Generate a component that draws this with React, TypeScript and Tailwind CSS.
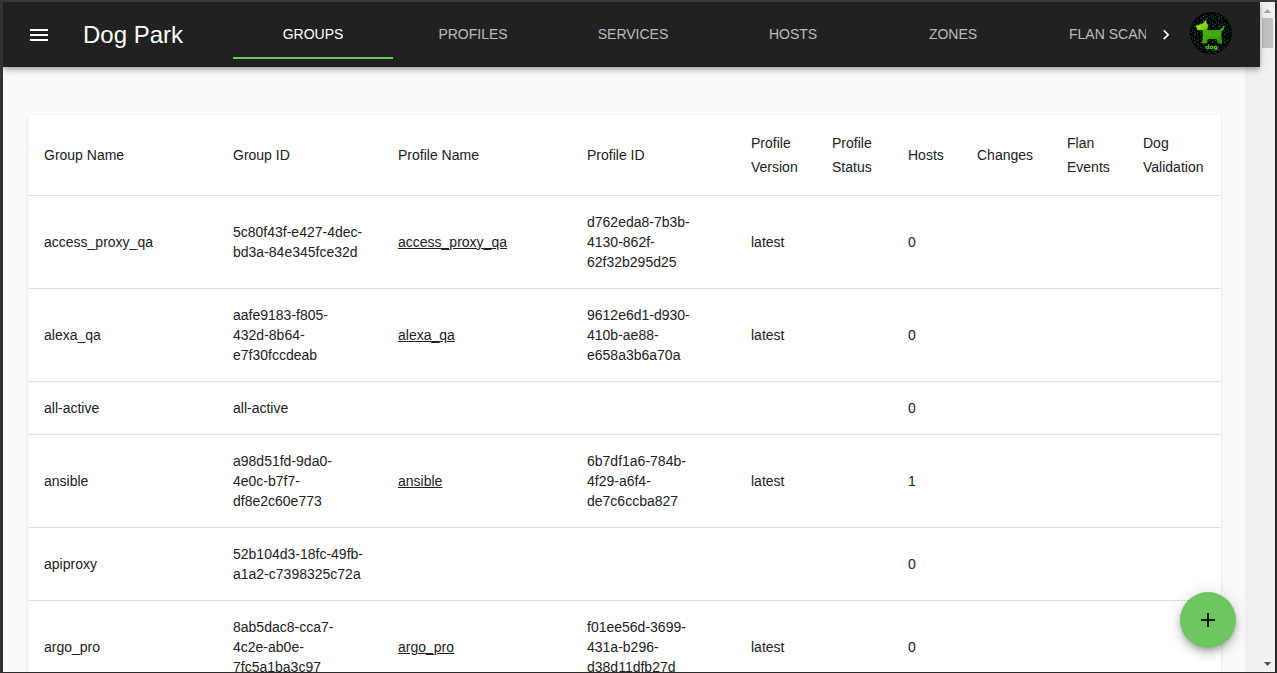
import { useState } from 'react';

type Row = {
  name: string;
  id: string;
  profile?: string;
  profileId?: string;
  version?: string;
  hosts: number;
};

const rows: Row[] = [
  { name: 'access_proxy_qa', id: '5c80f43f-e427-4dec-\nbd3a-84e345fce32d', profile: 'access_proxy_qa', profileId: 'd762eda8-7b3b-\n4130-862f-\n62f32b295d25', version: 'latest', hosts: 0 },
  { name: 'alexa_qa', id: 'aafe9183-f805-\n432d-8b64-\ne7f30fccdeab', profile: 'alexa_qa', profileId: '9612e6d1-d930-\n410b-ae88-\ne658a3b6a70a', version: 'latest', hosts: 0 },
  { name: 'all-active', id: 'all-active', hosts: 0 },
  { name: 'ansible', id: 'a98d51fd-9da0-\n4e0c-b7f7-\ndf8e2c60e773', profile: 'ansible', profileId: '6b7df1a6-784b-\n4f29-a6f4-\nde7c6ccba827', version: 'latest', hosts: 1 },
  { name: 'apiproxy', id: '52b104d3-18fc-49fb-\na1a2-c7398325c72a', hosts: 0 },
  { name: 'argo_pro', id: '8ab5dac8-cca7-\n4c2e-ab0e-\n7fc5a1ba3c97', profile: 'argo_pro', profileId: 'f01ee56d-3699-\n431a-b296-\nd38d11dfb27d', version: 'latest', hosts: 0 },
];

const columns = [
  { label: 'Group Name', width: 'w-[189px]' },
  { label: 'Group ID', width: 'w-[165px]' },
  { label: 'Profile Name', width: 'w-[189px]' },
  { label: 'Profile ID', width: 'w-[164px]' },
  { label: 'Profile Version', width: 'w-[81px]' },
  { label: 'Profile Status', width: 'w-[76px]' },
  { label: 'Hosts', width: 'w-[69px]' },
  { label: 'Changes', width: 'w-[90px]' },
  { label: 'Flan Events', width: 'w-[76px]' },
  { label: 'Dog Validation', width: 'w-[94px]' },
];

const tabs = ['Groups', 'Profiles', 'Services', 'Hosts', 'Zones', 'Flan Scans'];

function DogLogo() {
  return (
    <svg viewBox="0 0 42 42" className="size-[42px]" role="img" aria-label="dog">
      <defs>
        <linearGradient id="dogHead" x1="0" y1="0" x2="1" y2="1">
          <stop offset="0" stopColor="#b4f01e" />
          <stop offset="1" stopColor="#5fc40f" />
        </linearGradient>
        <linearGradient id="dogBody" x1="0" y1="0" x2="1" y2="1">
          <stop offset="0" stopColor="#4fbe0c" />
          <stop offset="1" stopColor="#2a960a" />
        </linearGradient>
        <pattern id="matrix" width="6" height="8" patternUnits="userSpaceOnUse">
          <path d="M1.500 0v1M1.500 4v1M4.500 3v1M4.500 6v1" stroke="#0f5548" strokeWidth="1" />
          <path d="M2.500 2v1M5.500 5v2" stroke="#12401a" strokeWidth="1" />
        </pattern>
      </defs>
      <circle cx="21" cy="21" r="21" fill="#020604" />
      <circle cx="21" cy="21" r="20" fill="url(#matrix)" />
      <path
        d="M12.500 17.500 17 17 18 18 28.500 18C31 17.500 32.500 16 33.500 13.500L34.300 14C34.300 17 33 18.800 31.500 19.800L31.300 24 32.300 31.500 27.700 31.500 27 27.500C24 26.500 20 26.500 17.500 27.500L16.800 31.500 12 31.500 12.800 24z"
        fill="url(#dogBody)"
      />
      <path d="M20 18h8.500l2.800 1.500-.3 4-4 2.500z" fill="#3fa80a" />
      <path d="M5.800 14 13 11.200 16 7.500 16.800 11.500 18.500 13.500 17.300 17 13 18.300 7.500 18z" fill="url(#dogHead)" />
      <text x="21.500" y="36.500" textAnchor="middle" fontSize="6" fontWeight="700" fill="#59d313" fontFamily="DejaVu Sans, sans-serif">dog</text>
    </svg>
  );
}

function Header({ active, onSelect }: { active: string; onSelect: (tab: string) => void }) {
  return (
    <header className="relative z-10 flex h-[65px] shrink-0 items-center bg-[#212121] pt-px pr-7 pl-6 text-white shadow-[0_2px_4px_-1px_rgba(0,0,0,0.2),0_4px_5px_0_rgba(0,0,0,0.14),0_1px_10px_0_rgba(0,0,0,0.12)]">
      <button type="button" aria-label="Open menu" className="shrink-0">
        <svg viewBox="0 0 24 24" className="size-6" fill="currentColor">
          <path d="M3 18h18v-2H3v2zm0-5h18v-2H3v2zm0-7v2h18V6H3z" />
        </svg>
      </button>
      <h1 className="ml-8 w-[150px] shrink-0 text-2xl">Dog Park</h1>
      <nav className="flex min-w-0 flex-1 overflow-hidden" role="tablist">
        {tabs.map((tab) => (
          <button
            key={tab}
            type="button"
            role="tab"
            aria-selected={tab === active}
            onClick={() => onSelect(tab)}
            className={
              tab === active
                ? 'h-12 w-40 shrink-0 border-b-2 border-[#6ec660] text-sm uppercase'
                : 'h-12 w-40 shrink-0 border-b-2 border-transparent text-sm text-white/70 uppercase'
            }
          >
            {tab}
          </button>
        ))}
      </nav>
      <button type="button" aria-label="Scroll tabs" className="flex w-10 shrink-0 justify-center">
        <svg viewBox="0 0 24 24" className="size-5" fill="currentColor">
          <path d="M8.590 16.340l4.580-4.590-4.580-4.590L10 5.750l6 6-6 6z" />
        </svg>
      </button>
      <div className="ml-1 shrink-0 pb-1">
        <DogLogo />
      </div>
    </header>
  );
}

function GroupTable() {
  return (
    <div className="overflow-hidden rounded bg-white shadow-[0_2px_1px_-1px_rgba(0,0,0,0.2),0_1px_1px_0_rgba(0,0,0,0.14),0_1px_3px_0_rgba(0,0,0,0.12)]">
      <table className="w-full table-fixed text-left text-sm">
        <thead>
          <tr className="border-b border-[#e0e0e0]">
            {columns.map((column) => (
              <th key={column.label} scope="col" className={`${column.width} py-4 pl-4 leading-6 font-normal`}>
                {column.label}
              </th>
            ))}
          </tr>
        </thead>
        <tbody>
          {rows.map((row) => (
            <tr key={row.name} className="border-b border-[#e0e0e0] leading-5">
              <td className="p-4">{row.name}</td>
              <td className="py-4 pl-4 whitespace-pre-line">{row.id}</td>
              <td className="p-4">
                {row.profile && (
                  <a href="#profile" className="underline">
                    {row.profile}
                  </a>
                )}
              </td>
              <td className="py-4 pl-4 whitespace-pre-line">{row.profileId}</td>
              <td className="p-4">{row.version}</td>
              <td />
              <td className="p-4">{row.hosts}</td>
              <td />
              <td />
              <td />
            </tr>
          ))}
        </tbody>
      </table>
    </div>
  );
}

function ScrollTrack() {
  return (
    <div aria-hidden="true" className="flex w-[15px] shrink-0 flex-col items-center bg-[#f1f1f1] pt-px">
      <svg viewBox="0 0 15 15" className="size-[15px]" fill="#a3a3a3">
        <path d="M4 10h7L7.500 6z" />
      </svg>
      <div className="h-[30px] w-[11px] bg-[#c1c1c1]" />
      <svg viewBox="0 0 15 15" className="mt-auto size-[15px]" fill="#505050">
        <path d="M4 5h7L7.500 9z" />
      </svg>
    </div>
  );
}

export default function App() {
  const [active, setActive] = useState('Groups');

  return (
    <div className="flex h-screen overflow-hidden border-t-2 border-r-2 border-b border-l-[3px] border-t-[#3a3a3a] border-r-[#2b2b2b] border-b-[#2b2b2b] border-l-[#333333] font-['Liberation_Sans',Arial,sans-serif] text-[#212121]">
      <div className="relative flex min-w-0 flex-1 flex-col">
        <Header active={active} onSelect={setActive} />
        <div className="flex min-h-0 flex-1 bg-[#f0f0f0] pr-[15px]">
          <main className="min-w-0 flex-1 overflow-hidden bg-[#fafafa] pt-12 pr-6 pl-[25px]">
            <GroupTable />
          </main>
        </div>
        <button
          type="button"
          aria-label="Add group"
          className="absolute right-6 bottom-6 z-20 flex size-14 items-center justify-center rounded-full bg-[#6ec660] text-black/87 shadow-[0_3px_5px_-1px_rgba(0,0,0,0.2),0_6px_10px_0_rgba(0,0,0,0.14),0_1px_18px_0_rgba(0,0,0,0.12)]"
        >
          <svg viewBox="0 0 24 24" className="size-6" fill="currentColor">
            <path d="M19 13h-6v6h-2v-6H5v-2h6V5h2v6h6v2z" />
          </svg>
        </button>
      </div>
      <ScrollTrack />
    </div>
  );
}
